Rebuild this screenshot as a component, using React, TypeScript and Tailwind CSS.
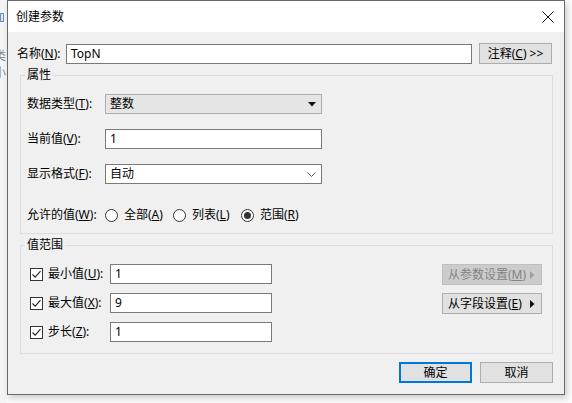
import React from 'react'

const font = { fontFamily: '"Noto Sans", "Noto Sans CJK SC", sans-serif' }

function Check() {
  return (
    <span className="flex h-[13px] w-[13px] items-center justify-center border border-[#333333] bg-white">
      <svg width="11" height="11" viewBox="0 0 11 11">
        <path d="M1.5 5.5 L4.2 8.2 L9.5 2.2" fill="none" stroke="#222222" strokeWidth="1.1" />
      </svg>
    </span>
  )
}

function Radio({ on }: { on?: boolean }) {
  return (
    <span className="flex h-[13px] w-[13px] items-center justify-center rounded-full border border-[#333333] bg-white">
      {on && <span className="h-[7px] w-[7px] rounded-full bg-[#333333]" />}
    </span>
  )
}

function Btn({ children, w = 'w-[73px]', primary, disabled }: { children: React.ReactNode; w?: string; primary?: boolean; disabled?: boolean }) {
  return (
    <div
      className={`flex h-[21px] items-center justify-center text-[12px] ${w} ${
        primary
          ? 'border-2 border-[#0078d7] bg-[#e1e1e1] text-black'
          : disabled
          ? 'border border-[#bfbfbf] bg-[#cccccc] text-[#838383]'
          : 'border border-[#adadad] bg-[#e1e1e1] text-black'
      }`}
    >
      {children}
    </div>
  )
}

function MenuBtn({ label, disabled }: { label: React.ReactNode; disabled?: boolean }) {
  return (
    <div
      className={`flex h-[21px] w-[100px] items-center justify-between pl-[5px] pr-[6px] text-[12px] ${
        disabled ? 'border border-[#bfbfbf] bg-[#cccccc] text-[#838383]' : 'border border-[#adadad] bg-[#e1e1e1] text-black'
      }`}
    >
      <span>{label}</span>
      <svg width="5" height="8" viewBox="0 0 5 8">
        <path d="M0 0 L4.5 4 L0 8 Z" fill={disabled ? '#a0a0a0' : '#111111'} />
      </svg>
    </div>
  )
}

function Field({ value, w = 'w-[217px]' }: { value: string; w?: string }) {
  return (
    <div className={`flex h-[20px] items-center border border-[#7a7a7a] bg-white pl-[4px] text-[12px] ${w}`}>{value}</div>
  )
}

export default function App() {
  return (
    <div className="flex h-[403px] w-[572px] overflow-hidden bg-[#fafafa] text-black" style={font}>
      {/* behind the dialog */}
      <div className="flex w-[7px] flex-col overflow-hidden bg-[#f4f4f4]">
        <div className="mt-[13px] h-[9px] w-[4px] border border-[#6f8fb8] bg-[#dde7f3]" />
        <div className="-ml-[6px] mt-[27px] text-[12px] leading-[14px] text-[#8a8a8a]">类</div>
        <div className="-ml-[6px] mt-[3px] text-[12px] leading-[14px] text-[#8a8a8a]">小</div>
      </div>

      <div className="flex h-[395px] w-[558px] flex-col border border-[#6a6a6a] bg-[#f0f0f0] shadow-[2px_3px_6px_rgba(0,0,0,0.18)]">
        {/* title bar */}
        <div className="flex h-[31px] items-center justify-between bg-white pl-[8px] pr-[10px]">
          <span className="text-[12px]">创建参数</span>
          <svg width="12" height="12" viewBox="0 0 12 12">
            <path d="M0.5 0.5 L11.5 11.5 M11.5 0.5 L0.5 11.5" stroke="#111111" strokeWidth="1" />
          </svg>
        </div>

        {/* name */}
        <div className="mt-[11px] flex items-center pl-[9px]">
          <span className="w-[49px] text-[12px]">
            名称(<u>N</u>):
          </span>
          <Field value="TopN" w="w-[406px]" />
          <div className="ml-[7px]">
            <Btn>
              注释(<u>C</u>) &gt;&gt;
            </Btn>
          </div>
        </div>

        {/* 属性 */}
        <div className="relative ml-[12px] mr-[11px] mt-[11px] flex h-[159px] flex-col border border-[#dcdcdc] pl-[6px] pt-[18px]">
          <span className="absolute -top-[9px] left-[4px] bg-[#f0f0f0] px-[2px] text-[12px] leading-[16px]">属性</span>
          <div className="flex items-center">
            <span className="w-[78px] text-[12px]">
              数据类型(<u>T</u>):
            </span>
            <div className="flex h-[20px] w-[217px] items-center justify-between border border-[#adadad] bg-[#e5e5e5] pl-[4px] pr-[5px] text-[12px]">
              <span>整数</span>
              <svg width="8" height="5" viewBox="0 0 8 5">
                <path d="M0 0 L8 0 L4 4.5 Z" fill="#111111" />
              </svg>
            </div>
          </div>
          <div className="mt-[15px] flex items-center">
            <span className="w-[78px] text-[12px]">
              当前值(<u>V</u>):
            </span>
            <Field value="1" />
          </div>
          <div className="mt-[15px] flex items-center">
            <span className="w-[78px] text-[12px]">
              显示格式(<u>F</u>):
            </span>
            <div className="flex h-[20px] w-[217px] items-center justify-between border border-[#7a7a7a] bg-white pl-[4px] pr-[5px] text-[12px]">
              <span>自动</span>
              <svg width="9" height="5" viewBox="0 0 9 5">
                <path d="M0.5 0.5 L4.5 4.5 L8.5 0.5" fill="none" stroke="#555555" strokeWidth="1" />
              </svg>
            </div>
          </div>
          <div className="mt-[21px] flex h-[20px] items-center text-[12px]">
            <span className="w-[78px]">
              允许的值(<u>W</u>):
            </span>
            <Radio />
            <span className="ml-[6px] w-[49px]">
              全部(<u>A</u>)
            </span>
            <Radio />
            <span className="ml-[6px] w-[49px]">
              列表(<u>L</u>)
            </span>
            <Radio on />
            <span className="ml-[6px]">
              范围(<u>R</u>)
            </span>
          </div>
        </div>

        {/* 值范围 */}
        <div className="relative ml-[12px] mr-[11px] mt-[11px] flex h-[109px] justify-between border border-[#dcdcdc] pl-[9px] pr-[10px] pt-[18px]">
          <span className="absolute -top-[9px] left-[4px] bg-[#f0f0f0] px-[2px] text-[12px] leading-[16px]">值范围</span>
          <div className="flex flex-col gap-[9px]">
            {[
              ['最小值', 'U', '1'],
              ['最大值', 'X', '9'],
              ['步长', 'Z', '1'],
            ].map(([l, k, v]) => (
              <div key={k} className="flex h-[20px] items-center">
                <Check />
                <span className="ml-[5px] w-[62px] text-[12px]">
                  {l}(<u>{k}</u>):
                </span>
                <Field value={v} w="w-[162px]" />
              </div>
            ))}
          </div>
          <div className="flex flex-col gap-[8px]">
            <MenuBtn
              disabled
              label={
                <>
                  从参数设置(<u>M</u>)
                </>
              }
            />
            <MenuBtn
              label={
                <>
                  从字段设置(<u>E</u>)
                </>
              }
            />
          </div>
        </div>

        {/* footer */}
        <div className="mr-[11px] mt-[8px] flex justify-end gap-[8px]">
          <Btn primary>确定</Btn>
          <Btn>取消</Btn>
        </div>
      </div>
    </div>
  )
}
